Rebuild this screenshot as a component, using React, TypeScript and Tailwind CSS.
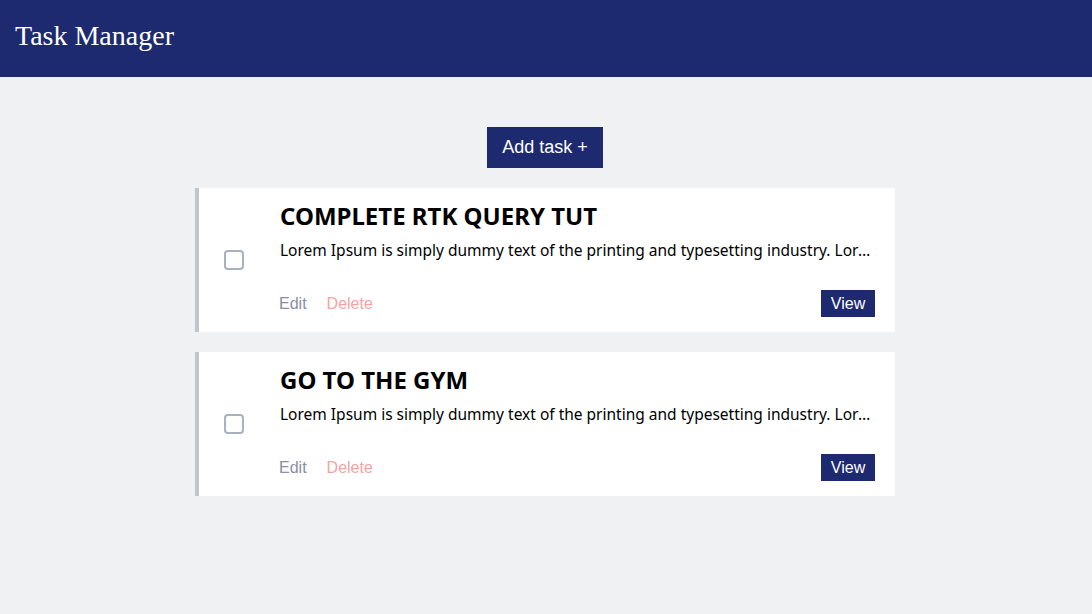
import React from "react";

const tasks = [
  { title: "COMPLETE RTK QUERY TUT" },
  { title: "GO TO THE GYM" },
];

const desc =
  "Lorem Ipsum is simply dummy text of the printing and typesetting industry. Lorem Ipsum has been the industry's standard dummy text ever since the 1500s.";

export default function App() {
  return (
    <div className="min-h-[614px] bg-[#f0f1f3]">
      <header className="h-[77px] bg-[#1e2a70] flex items-center px-4">
        <h1 className="text-white text-[28px] font-['Liberation_Serif',serif] leading-none -mt-[6px] -ml-[1px]">
          Task Manager
        </h1>
      </header>
      <main className="flex flex-col items-center pt-[50px] pr-[2px]">
        <button className="bg-[#1e2a70] text-white h-[41px] w-[116px] text-[18px] font-['Liberation_Sans',sans-serif]">
          Add task +
        </button>
        <div className="mt-5 flex flex-col gap-5 w-[700px]">
          {tasks.map((t) => (
            <div
              key={t.title}
              className="h-[144px] bg-white border-l-4 border-[#c0c5cd] flex items-center"
            >
              <div className="ml-[25px] w-5 h-5 rounded-[4px] border-2 border-[#a8b1bf] shrink-0" />
              <div className="ml-9 flex-1 min-w-0 pr-5 self-stretch flex flex-col pt-[13px] pb-[15px]">
                <div className="font-['Noto_Sans',sans-serif] font-bold text-[24px] leading-[30px] text-black">
                  {t.title}
                </div>
                <div className="mt-[8px] font-['Noto_Sans',sans-serif] text-[15.5px] leading-[22px] text-black truncate pr-[4px]">
                  {desc}
                </div>
                <div className="mt-auto -ml-[1px] flex items-center justify-between font-['Liberation_Sans',sans-serif] text-[16px]">
                  <div className="flex gap-5">
                    <span className="text-[#8a8e9e]">Edit</span>
                    <span className="text-[#f5a3a3]">Delete</span>
                  </div>
                  <button className="bg-[#1e2a70] text-white h-[27px] w-[54px] text-[16px]">
                    View
                  </button>
                </div>
              </div>
            </div>
          ))}
        </div>
      </main>
    </div>
  );
}
